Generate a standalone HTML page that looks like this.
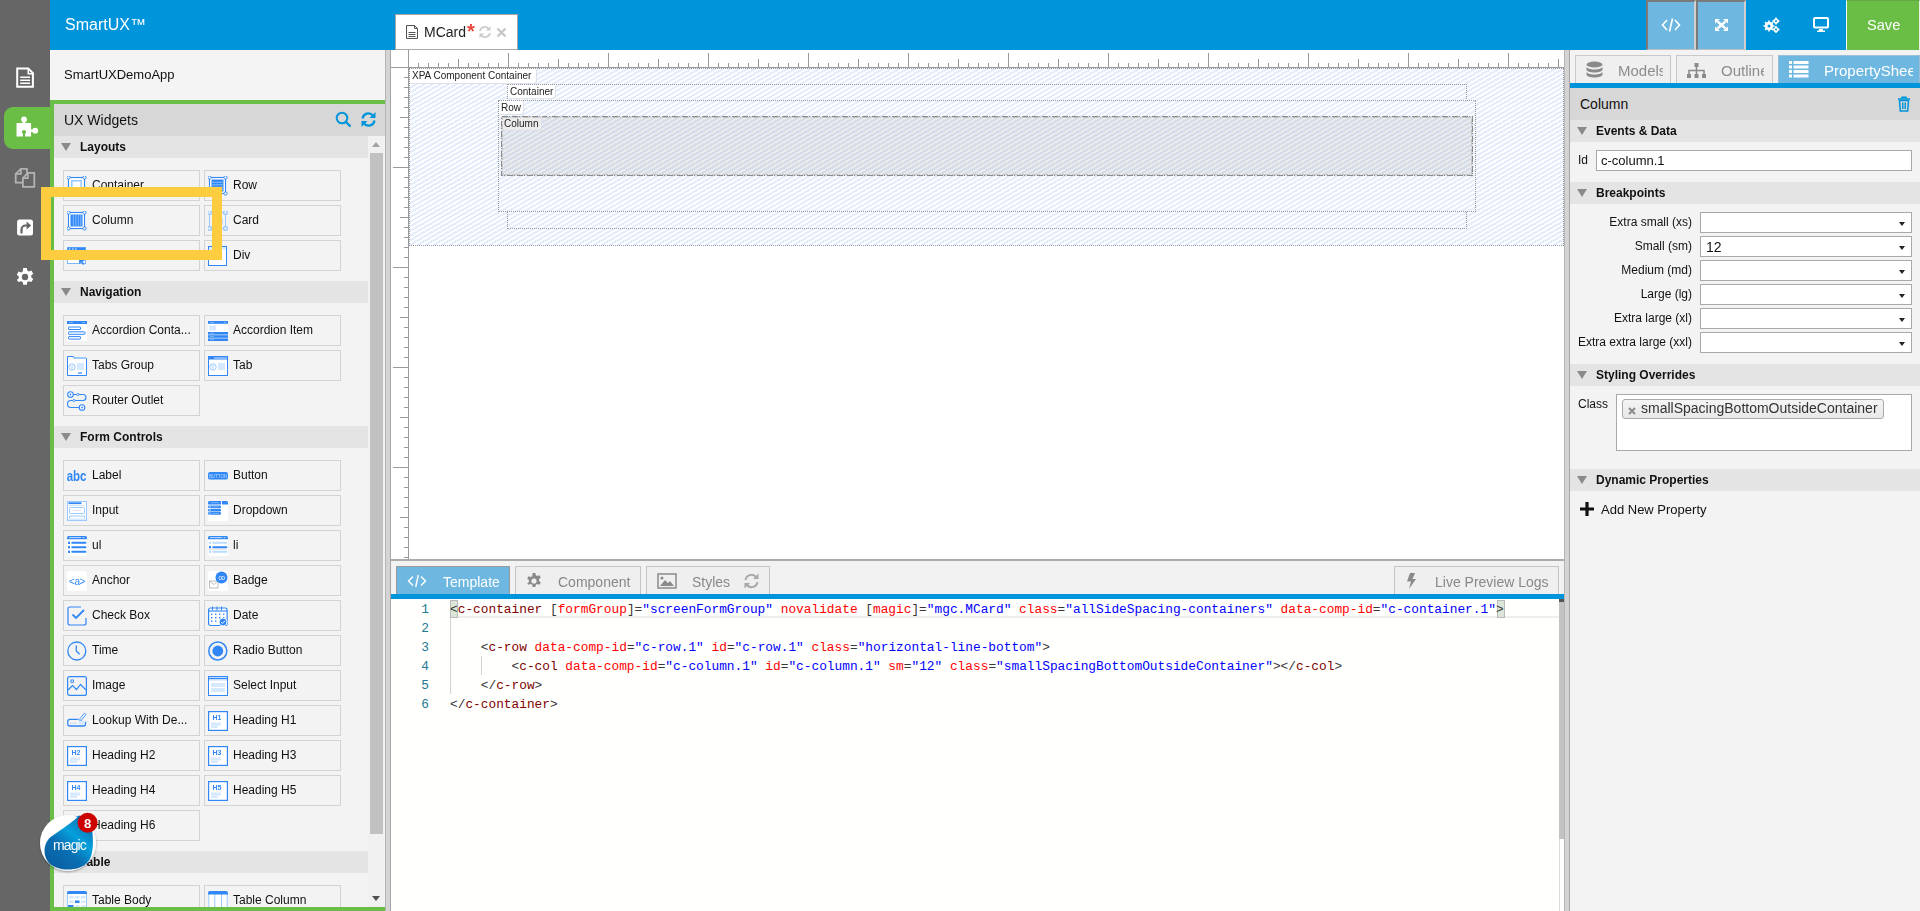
<!DOCTYPE html><html><head><meta charset="utf-8"><title>SmartUX</title><style>
*{box-sizing:border-box;margin:0;padding:0}
html,body{width:1920px;height:911px;overflow:hidden;background:#fff;font-family:"Liberation Sans",sans-serif;color:#222}
.a{position:absolute}
.w{position:absolute;width:137px;height:31px;border:1px solid #d3d3d3;background:#f3f3f3;font-size:12px;color:#111;white-space:nowrap;overflow:hidden}
.w .wi{position:absolute;left:3px;top:5px}
.w span{position:absolute;left:28px;top:7px;line-height:14px}
.sh{position:absolute;height:22px;background:#e4e4e4;font-size:12px;color:#111}
.sh b{position:absolute;left:26px;top:4px;line-height:14px}
.tri{position:absolute;left:7px;top:7px;width:0;height:0;border-left:5.5px solid transparent;border-right:5.5px solid transparent;border-top:8px solid #8a8a8a}
.ptab{position:absolute;top:55px;height:28px;border:1px solid #c9c9c9;border-bottom:none;background:#efefef;color:#8c8c8c;font-size:15px;overflow:hidden;white-space:nowrap}
.etab{position:absolute;top:566px;height:28px;border:1px solid #c4c4c4;border-bottom:none;background:#efefef;color:#888;font-size:14px;white-space:nowrap}
.lbl{position:absolute;font-size:12px;color:#111;text-align:right;width:130px;line-height:14px}
.sel{position:absolute;left:1700px;width:212px;height:21px;border:1px solid #a9a9a9;background:#fff;font-size:14px;color:#111}
.sel:after{content:"";position:absolute;right:6px;top:9px;border-left:3.5px solid transparent;border-right:3.5px solid transparent;border-top:4px solid #222}
.code{position:absolute;left:450px;font-family:"Liberation Mono",monospace;font-size:12.82px;line-height:19px;white-space:pre;color:#383838}
.tg{color:#800000} .at{color:#ff0000} .vl{color:#0000ff}
.ln{position:absolute;left:400px;width:29px;text-align:right;font-family:"Liberation Mono",monospace;font-size:12.82px;line-height:19px;color:#237893}
.cl{position:absolute;font-family:"Liberation Sans",sans-serif;font-size:10px;line-height:12px;color:#222;background:#fff;border-radius:0 0 3px 0;padding:0 3px 0 2px;box-shadow:1px 1px 0 #dde2ea}
</style></head><body><div class="a" style="left:0;top:0;width:50px;height:911px;background:#666"></div><div class="a" style="left:4px;top:107px;width:50px;height:42px;background:#6abd45;border-radius:9px 0 0 9px"></div><svg class="a" style="left:10px;top:60px" width="30" height="32" viewBox="10 60 30 32"><path d="M17.2 68.4h11l4.7 4.7v13.7H17.2z" fill="none" stroke="#fff" stroke-width="2"/><path d="M28.3 68.4v5.3h4.6" fill="none" stroke="#fff" stroke-width="1.6"/><path d="M20.2 77.2h9.8M20.2 80.2h9.8M20.2 83.2h9.8" stroke="#fff" stroke-width="1.6"/></svg><svg class="a" style="left:10px;top:110px" width="35" height="32" viewBox="10 110 35 32"><g fill="#fff"><rect x="16.5" y="123" width="14.6" height="13.5"/><circle cx="24" cy="119.4" r="2.9"/><rect x="22.8" y="120" width="2.4" height="4"/><circle cx="35.2" cy="130.7" r="2.9"/><rect x="30" y="129.5" width="4" height="2.4"/></g><g fill="#6abd45"><circle cx="24" cy="132" r="2.1"/><rect x="23" y="132" width="2" height="5"/></g></svg><svg class="a" style="left:10px;top:162px" width="30" height="30" viewBox="10 162 30 30"><g fill="none" stroke="#b3b3b3" stroke-width="1.8" stroke-linejoin="round"><path d="M27 173V168.8H20.9L15.7 173.9V182.7H22.9"/><path d="M15.7 173.9H20.9V168.8"/><path d="M27.8 172.8H34.3V186.9H22.9V178.2Z"/><path d="M22.9 178.2H27.8V172.8"/></g></svg><svg class="a" style="left:10px;top:210px" width="30" height="30" viewBox="10 210 30 30"><rect x="17.1" y="219.4" width="15.9" height="16" rx="2.5" fill="#fff"/><path d="M21.5 233.5v-4a4 4 0 0 1 4-4h2" fill="none" stroke="#666" stroke-width="2.2"/><path d="M26.6 221.6l4.6 4-4.6 4z" fill="#666"/></svg><svg class="a" style="left:15px;top:267px" width="20" height="20" viewBox="0 0 20 20"><path fill="#fff" fill-rule="evenodd" d="M8.2 1h3.6l.5 2.6 1.6.9 2.5-.9 1.8 3.1-2 1.7v1.9l2 1.7-1.8 3.1-2.5-.9-1.6.9-.5 2.6H8.2l-.5-2.6-1.6-.9-2.5.9L1.8 13l2-1.7V9.4l-2-1.7 1.8-3.1 2.5.9 1.6-.9zM10 6.8a3.2 3.2 0 1 0 0 6.4 3.2 3.2 0 0 0 0-6.4z"/></svg><div class="a" style="left:50px;top:0;width:1870px;height:50px;background:#0095da"></div><div class="a" style="left:65px;top:16px;font-size:16px;color:#fff;line-height:18px">SmartUX™</div><div class="a" style="left:395px;top:14px;width:123px;height:36px;background:#fff;border:1px solid #a9a3a3;border-bottom:1px solid #aaa"></div><svg class="a" style="left:405px;top:24px" width="14" height="16" viewBox="0 0 14 16"><path d="M1.5 1.5h8l3 3v10h-11z" fill="#fff" stroke="#555" stroke-width="1"/><path d="M9.5 1.5v3h3" fill="none" stroke="#555" stroke-width="1"/><path d="M3.5 8.5h7M3.5 10.5h7M3.5 12.5h7" stroke="#555" stroke-width="1"/></svg><div class="a" style="left:424px;top:24px;font-size:14px;line-height:16px;color:#222">MCard</div><div class="a" style="left:467px;top:21px;font-size:20px;font-weight:bold;line-height:21px;color:#e8483c">*</div><svg class="a" style="left:478px;top:25px" width="14" height="14" viewBox="0 0 14 14"><path d="M2 6a5 5 0 0 1 9-2M12 8a5 5 0 0 1-9 2" fill="none" stroke="#ccc" stroke-width="1.8"/><path d="M12.5 1v4.5H8z M1.5 13V8.5H6z" fill="#ccc"/></svg><svg class="a" style="left:496px;top:27px" width="11" height="11" viewBox="0 0 11 11"><path d="M1.5 1.5l8 8M9.5 1.5l-8 8" stroke="#c8c8c8" stroke-width="2.4"/></svg><div class="a" style="left:1646px;top:0;width:50px;height:50px;background:#6db7e1;border-left:2px solid #7a7a7a;border-top:2px solid #7a7a7a;border-bottom:1px solid #b9bfc3;border-right:2px solid #d3cfcc"></div><div class="a" style="left:1696px;top:0;width:50px;height:50px;background:#6db7e1;border-left:2px solid #7a7a7a;border-top:2px solid #7a7a7a;border-bottom:1px solid #b9bfc3;border-right:2px solid #d3cfcc"></div><svg class="a" style="left:1661px;top:17px" width="20" height="16" viewBox="0 0 20 16"><path d="M6 3L1.5 8 6 13M14 3l4.5 5L14 13M11.5 1.5L8.5 14.5" fill="none" stroke="#fff" stroke-width="1.6"/></svg><svg class="a" style="left:1715px;top:19px" width="13" height="12" viewBox="0 0 13 12"><path d="M2.5 2.5l8 7M10.5 2.5l-8 7" stroke="#fff" stroke-width="2.4"/><path fill="#fff" d="M0 0h5L0 4.6zM13 0v4.6L8 0zM0 12V7.4L5 12zM13 12H8l5-4.6z"/></svg><svg class="a" style="left:1763px;top:17px" width="17" height="16" viewBox="0 0 17 16"><g fill="#fff"><circle cx="6" cy="9" r="4.2"/><circle cx="13" cy="4" r="2.6"/><circle cx="13" cy="12.5" r="2.6"/></g><circle cx="6" cy="9" r="1.5" fill="#0095da"/><circle cx="13" cy="4" r="1" fill="#0095da"/><circle cx="13" cy="12.5" r="1" fill="#0095da"/><g stroke="#fff" stroke-width="1.6"><path d="M6 3.5v11M0.5 9h11M2.1 5.1l7.8 7.8M9.9 5.1l-7.8 7.8"/><path d="M13 0.5v7M9.5 4h7M13 9v7M9.5 12.5h7"/></g><circle cx="6" cy="9" r="1.5" fill="#0095da"/><circle cx="13" cy="4" r="1" fill="#0095da"/><circle cx="13" cy="12.5" r="1" fill="#0095da"/></svg><svg class="a" style="left:1813px;top:17px" width="16" height="15" viewBox="0 0 16 15"><rect x="1" y="1" width="14" height="9.5" rx="1" fill="none" stroke="#fff" stroke-width="2"/><path d="M6 12h4v1.5h2V15H4v-1.5h2z" fill="#fff"/></svg><div class="a" style="left:1846px;top:0;width:74px;height:50px;background:#6abd45;border-left:1px solid #f4f9f1;border-top:1px solid #64a846;border-right:1px solid #e9f3e4"></div><div class="a" style="left:1867px;top:17px;font-size:14.6px;line-height:17px;color:#fff">Save</div><div class="a" style="left:50px;top:50px;width:335px;height:50px;background:#f4f4f4"></div><div class="a" style="left:64px;top:67px;font-size:13px;line-height:15px;color:#111">SmartUXDemoApp</div><div class="a" style="left:50px;top:100px;width:335px;height:811px;background:#6abd45"></div><div class="a" style="left:54px;top:104px;width:331px;height:803px;background:#f3f3f3"></div><div class="a" style="left:54px;top:104px;width:331px;height:32px;background:#d7d7d7"></div><div class="a" style="left:64px;top:112px;font-size:14px;line-height:16px;color:#111">UX Widgets</div><svg class="a" style="left:335px;top:111px" width="17" height="17" viewBox="0 0 17 17"><circle cx="7" cy="7" r="5.3" fill="none" stroke="#0095da" stroke-width="2"/><path d="M10.8 10.8l4.7 4.7" stroke="#0095da" stroke-width="2.4"/></svg><svg class="a" style="left:360px;top:111px" width="17" height="17" viewBox="0 0 17 17"><path d="M2.5 7.5a6 6 0 0 1 10.5-3M14.5 9.5a6 6 0 0 1-10.5 3" fill="none" stroke="#0095da" stroke-width="2.2"/><path d="M15.5 1v6h-6z M1.5 16v-6h6z" fill="#0095da"/></svg><div class="a" style="left:368px;top:136px;width:17px;height:771px;background:#f1f1f1"></div><div class="a" style="left:370px;top:153px;width:13px;height:681px;background:#c1c1c1"></div><div class="a" style="left:372px;top:142px;border-left:4.5px solid transparent;border-right:4.5px solid transparent;border-bottom:5px solid #a3a3a3"></div><div class="a" style="left:372px;top:896px;border-left:4.5px solid transparent;border-right:4.5px solid transparent;border-top:5px solid #505050"></div><div class="a" style="left:54px;top:136px;width:331px;height:771px;overflow:hidden"><div class="a" style="left:-54px;top:-136px;width:1920px;height:911px"><div class="sh" style="left:54px;top:136px;width:314px"><i class="tri"></i><b>Layouts</b></div><div class="w" style="left:63px;top:170px"><svg class="wi" width="22" height="22" viewBox="0 0 22 22"><rect x="1.5" y="1.5" width="16" height="16" fill="#fff" stroke="#3187f5" stroke-width="1.1"/><rect x="4.8" y="4.8" width="9.4" height="9.4" fill="#fff" stroke="#9ccaff" stroke-width="1.6"/><circle cx="1.5" cy="1.5" r="1.6" fill="#fff" stroke="#3187f5" stroke-width="1"/><circle cx="17.5" cy="1.5" r="1.6" fill="#fff" stroke="#3187f5" stroke-width="1"/><circle cx="1.5" cy="17.5" r="1.6" fill="#fff" stroke="#3187f5" stroke-width="1"/><circle cx="17.5" cy="17.5" r="1.6" fill="#fff" stroke="#3187f5" stroke-width="1"/></svg><span>Container</span></div><div class="w" style="left:204px;top:170px"><svg class="wi" width="22" height="22" viewBox="0 0 22 22"><rect x="1.5" y="1.5" width="16" height="16" fill="#fff" stroke="#3187f5" stroke-width="1.1"/><rect x="3.5" y="3.5" width="12" height="12" fill="#3187f5"/><path d="M3.5 6.3h12M3.5 8.8h12M3.5 11.3h12M3.5 13.8h12" stroke="#a8d1ff" stroke-width="0.7"/><circle cx="1.5" cy="1.5" r="1.6" fill="#fff" stroke="#3187f5" stroke-width="1"/><circle cx="17.5" cy="1.5" r="1.6" fill="#fff" stroke="#3187f5" stroke-width="1"/><circle cx="1.5" cy="17.5" r="1.6" fill="#fff" stroke="#3187f5" stroke-width="1"/><circle cx="17.5" cy="17.5" r="1.6" fill="#fff" stroke="#3187f5" stroke-width="1"/></svg><span>Row</span></div><div class="w" style="left:63px;top:205px"><svg class="wi" width="22" height="22" viewBox="0 0 22 22"><rect x="1.5" y="1.5" width="16" height="16" fill="#fff" stroke="#3187f5" stroke-width="1.1"/><rect x="3.5" y="3.5" width="12" height="12" fill="#3187f5"/><path d="M6.3 3.5v12M8.8 3.5v12M11.3 3.5v12M13.8 3.5v12" stroke="#a8d1ff" stroke-width="0.7"/><circle cx="1.5" cy="1.5" r="1.6" fill="#fff" stroke="#3187f5" stroke-width="1"/><circle cx="17.5" cy="1.5" r="1.6" fill="#fff" stroke="#3187f5" stroke-width="1"/><circle cx="1.5" cy="17.5" r="1.6" fill="#fff" stroke="#3187f5" stroke-width="1"/><circle cx="17.5" cy="17.5" r="1.6" fill="#fff" stroke="#3187f5" stroke-width="1"/></svg><span>Column</span></div><div class="w" style="left:204px;top:205px"><svg class="wi" width="22" height="22" viewBox="0 0 22 22"><rect x="1.5" y="1.5" width="16" height="16" fill="none" stroke="#9ccaff" stroke-width="1"/><rect x="9" y="8" width="5" height="5" fill="none" stroke="#9ccaff" stroke-width="1"/><rect x="-0.10000000000000009" y="-0.10000000000000009" width="3.2" height="3.2" fill="#fff" stroke="#7db8ff" stroke-width="1"/><rect x="15.9" y="-0.10000000000000009" width="3.2" height="3.2" fill="#fff" stroke="#7db8ff" stroke-width="1"/><rect x="-0.10000000000000009" y="15.9" width="3.2" height="3.2" fill="#fff" stroke="#7db8ff" stroke-width="1"/><rect x="15.9" y="15.9" width="3.2" height="3.2" fill="#fff" stroke="#7db8ff" stroke-width="1"/></svg><span>Card</span></div><div class="w" style="left:63px;top:240px"><svg class="wi" width="22" height="22" viewBox="0 0 22 22"><rect x="0.5" y="1.5" width="18" height="16" fill="#fff" stroke="#7db8ff" stroke-width="1"/><rect x="0.5" y="1.5" width="18" height="3" fill="#3187f5"/><path d="M2 3h1.5M5 3h1.5M8 3h1.5" stroke="#fff" stroke-width="1.2"/><path d="M12 12l6 2.5-2.5 1 1.8 2.8-1.3.8-1.8-2.8-2 1.8z" fill="#3187f5"/></svg><span>Grid</span></div><div class="w" style="left:204px;top:240px"><svg class="wi" width="22" height="22" viewBox="0 0 22 22"><rect x="0.5" y="0.5" width="18" height="19" fill="#fff" stroke="#3187f5" stroke-width="1"/><rect x="1" y="1" width="17" height="2.5" fill="#d6e9ff"/><path d="M6 8l5 3-5 3" fill="none" stroke="#9ccaff" stroke-width="1"/></svg><span>Div</span></div><div class="sh" style="left:54px;top:281px;width:314px"><i class="tri"></i><b>Navigation</b></div><div class="w" style="left:63px;top:315px"><svg class="wi" width="22" height="22" viewBox="0 0 22 22"><rect x="0" y="0" width="20" height="20" fill="#fff"/><rect x="0" y="0" width="20" height="3" fill="#3187f5"/><path d="M2 1.5h4M15 1.5h3" stroke="#8fc4ff" stroke-width="0.8"/><rect x="1.5" y="6" width="12" height="2.5" rx="0.5" fill="none" stroke="#3187f5" stroke-width="1"/><rect x="1.5" y="10.8" width="16.5" height="2.5" rx="0.5" fill="none" stroke="#3187f5" stroke-width="1"/><rect x="1.5" y="15.6" width="12" height="2.5" rx="0.5" fill="none" stroke="#3187f5" stroke-width="1"/></svg><span>Accordion Conta...</span></div><div class="w" style="left:204px;top:315px"><svg class="wi" width="22" height="22" viewBox="0 0 22 22"><rect x="0" y="0" width="20" height="20" fill="#fff"/><rect x="0" y="0" width="20" height="2.8" fill="#3187f5"/><path d="M2 1.4h4M16 1.4h2" stroke="#8fc4ff" stroke-width="0.8"/><rect x="1" y="4.5" width="7" height="5" fill="#d6e9ff"/><rect x="0" y="11" width="20" height="2.6" fill="#3187f5"/><rect x="0" y="14.2" width="20" height="2.6" fill="#3187f5"/><rect x="0" y="17.4" width="20" height="2.6" fill="#3187f5"/><path d="M2 12.3h4M2 15.5h4M2 18.7h4" stroke="#8fc4ff" stroke-width="0.7"/></svg><span>Accordion Item</span></div><div class="w" style="left:63px;top:350px"><svg class="wi" width="22" height="22" viewBox="0 0 22 22"><path d="M0.5 19.5V0.5h6l1 2h12v17z" fill="#fff" stroke="#3187f5" stroke-width="1"/><path d="M8 1h11v2H8z" fill="#9ccaff"/><circle cx="5" cy="11" r="3.2" fill="none" stroke="#9ccaff" stroke-width="1"/><path d="M3 9.5l2 1.5v2.5M6.5 8.5l-1 2" stroke="#9ccaff" stroke-width="0.8" fill="none"/><rect x="10" y="7" width="7" height="7" fill="#d6e9ff"/><path d="M11 17h4" stroke="#3187f5" stroke-width="1.2"/></svg><span>Tabs Group</span></div><div class="w" style="left:204px;top:350px"><svg class="wi" width="22" height="22" viewBox="0 0 22 22"><rect x="0.5" y="0.5" width="19" height="19" fill="#fff" stroke="#3187f5" stroke-width="1"/><rect x="0.5" y="0.5" width="19" height="3" fill="#3187f5"/><path d="M6 2h13" stroke="#fff" stroke-width="0.8"/><circle cx="5" cy="11" r="3.2" fill="none" stroke="#9ccaff" stroke-width="1"/><path d="M3 9.5l2 1.5v2.5M6.5 8.5l-1 2" stroke="#9ccaff" stroke-width="0.8" fill="none"/><rect x="10" y="7" width="7" height="7" fill="#d6e9ff"/></svg><span>Tab</span></div><div class="w" style="left:63px;top:385px"><svg class="wi" width="22" height="22" viewBox="0 0 22 22"><circle cx="3.5" cy="3.5" r="2.8" fill="#fff" stroke="#3187f5" stroke-width="1.1"/><circle cx="15" cy="16.5" r="2.8" fill="#fff" stroke="#3187f5" stroke-width="1.1"/><path d="M6.3 3.5H16a3 3 0 0 1 0 6H4a3 3 0 0 0 0 7h8.2" fill="none" stroke="#3187f5" stroke-width="1.1"/><circle cx="3.5" cy="3.5" r="0.9" fill="#3187f5"/><circle cx="15" cy="16.5" r="0.9" fill="#3187f5"/><circle cx="11" cy="3.5" r="1.1" fill="#fff" stroke="#3187f5" stroke-width="0.8"/><circle cx="7" cy="9.5" r="1.1" fill="#fff" stroke="#3187f5" stroke-width="0.8"/></svg><span>Router Outlet</span></div><div class="sh" style="left:54px;top:426px;width:314px"><i class="tri"></i><b>Form Controls</b></div><div class="w" style="left:63px;top:460px"><svg class="wi" width="22" height="22" viewBox="0 0 22 22"><text x="0" y="0" transform="translate(-0.3 15) scale(0.96 1.2)" font-family="Liberation Sans" font-weight="bold" font-size="12" fill="#3187f5">abc</text></svg><span>Label</span></div><div class="w" style="left:204px;top:460px"><svg class="wi" width="22" height="22" viewBox="0 0 22 22"><rect x="0" y="6" width="20" height="7.6" rx="2.2" fill="#3187f5"/><text x="10" y="11.5" font-family="Liberation Sans" font-size="4.6" fill="#b9dcff" text-anchor="middle" letter-spacing="-0.1">BUTTON</text></svg><span>Button</span></div><div class="w" style="left:63px;top:495px"><svg class="wi" width="22" height="22" viewBox="0 0 22 22"><rect x="0.5" y="0.5" width="19" height="19" fill="#fff" stroke="#9ccaff" stroke-width="1"/><rect x="1.5" y="1.3" width="13" height="1.8" fill="#3187f5"/><path d="M2 4.5h16" stroke="#d6e9ff" stroke-width="1.2"/><rect x="2.5" y="6.5" width="15" height="6" rx="1" fill="#fff" stroke="#9ccaff" stroke-width="1"/><path d="M6 9.5h8" stroke="#ddd" stroke-width="0.8"/><path d="M2.5 17V15h15v2" fill="none" stroke="#9ccaff" stroke-width="1"/><rect x="1" y="17.5" width="18" height="1.5" fill="#d6e9ff"/></svg><span>Input</span></div><div class="w" style="left:204px;top:495px"><svg class="wi" width="22" height="22" viewBox="0 0 22 22"><rect x="0" y="0" width="20" height="20" rx="1.5" fill="#fff"/><path d="M0 3.5V1.5Q0 0 1.5 0H13v3.5z" fill="#3187f5"/><path d="M14 0h4.5Q20 0 20 1.5v2H14z" fill="#3187f5"/><path d="M3 1.7h8" stroke="#8fc4ff" stroke-width="0.7"/><rect x="0" y="4.5" width="13" height="2.6" rx="1.2" fill="#3187f5"/><rect x="0" y="7.8" width="13" height="2.6" rx="1.2" fill="#3187f5"/><rect x="0" y="11.1" width="13" height="2.6" rx="1.2" fill="#3187f5"/><path d="M2 4.8v2M2 8.1v2M2 11.4v2" stroke="#fff" stroke-width="0.8"/><path d="M4 5.8h7M4 12.4h7" stroke="#8fc4ff" stroke-width="0.6"/></svg><span>Dropdown</span></div><div class="w" style="left:63px;top:530px"><svg class="wi" width="22" height="22" viewBox="0 0 22 22"><rect x="0" y="0" width="20" height="20" rx="1.5" fill="#fff"/><path d="M0 3.2V1.5Q0 0 1.5 0h17Q20 0 20 1.5v1.7z" fill="#3187f5"/><path d="M2 1.6h12M15.5 1.6h2" stroke="#fff" stroke-width="0.7"/><rect x="1" y="5.6" width="2" height="2.4" fill="#3187f5"/><rect x="1" y="10" width="2" height="2.4" fill="#3187f5"/><rect x="1" y="14.6" width="2" height="2.4" fill="#3187f5"/><path d="M5.2 6.8h13.3M5.2 11.2h13.3M5.2 15.8h13.3" stroke="#3187f5" stroke-width="1.9" stroke-linecap="round"/></svg><span>ul</span></div><div class="w" style="left:204px;top:530px"><svg class="wi" width="22" height="22" viewBox="0 0 22 22"><rect x="0" y="0" width="20" height="20" rx="1.5" fill="#fff"/><path d="M0 3.2V1.5Q0 0 1.5 0h17Q20 0 20 1.5v1.7z" fill="#3187f5"/><path d="M2 1.6h12M15.5 1.6h2" stroke="#fff" stroke-width="0.7"/><rect x="1" y="5.6" width="2" height="2.4" fill="#b9dcff"/><rect x="1" y="10" width="2" height="2.4" fill="#3187f5"/><rect x="1" y="14.6" width="2" height="2.4" fill="#b9dcff"/><path d="M5.2 6.8h13.3M5.2 15.8h13.3" stroke="#b9dcff" stroke-width="1.9" stroke-linecap="round"/><path d="M5.2 11.2h13.3" stroke="#3187f5" stroke-width="1.9" stroke-linecap="round"/><path d="M0.5 13.3h18" stroke="#ccc" stroke-width="0.6"/></svg><span>li</span></div><div class="w" style="left:63px;top:565px"><svg class="wi" width="22" height="22" viewBox="0 0 22 22"><rect x="0" y="0" width="20" height="20" rx="2" fill="#fff"/><text x="10" y="13.5" font-family="Liberation Sans" font-size="10" fill="#3187f5" text-anchor="middle" letter-spacing="-0.4">&lt;a&gt;</text></svg><span>Anchor</span></div><div class="w" style="left:204px;top:565px"><svg class="wi" width="22" height="22" viewBox="0 0 22 22"><rect x="0" y="0" width="20" height="20" rx="2" fill="#fff"/><rect x="1.5" y="10" width="8.5" height="7" fill="#fff" stroke="#b5b5b5" stroke-width="0.9"/><path d="M1.5 10l4.25 3.5L10 10" fill="none" stroke="#b5b5b5" stroke-width="0.9"/><circle cx="13.5" cy="6.5" r="6" fill="#3187f5"/><text x="13.5" y="8.6" font-family="Liberation Sans" font-size="6" fill="#fff" text-anchor="middle" letter-spacing="-0.3">00</text></svg><span>Badge</span></div><div class="w" style="left:63px;top:600px"><svg class="wi" width="22" height="22" viewBox="0 0 22 22"><path d="M14 1H3Q1 1 1 3v14q0 2 2 2h14q2 0 2-2v-5" fill="none" stroke="#3187f5" stroke-width="1.2"/><path d="M5.5 8.5l3.5 3.5L17 4" fill="none" stroke="#3187f5" stroke-width="1.8"/></svg><span>Check Box</span></div><div class="w" style="left:204px;top:600px"><svg class="wi" width="22" height="22" viewBox="0 0 22 22"><rect x="0.6" y="2" width="18.5" height="17.5" rx="2" fill="#fff" stroke="#3187f5" stroke-width="1.2"/><path d="M0.6 5h18.5" stroke="#3187f5" stroke-width="1.2"/><path d="M4.5 0.5v3.5M9 0.5v3.5M13.5 0.5v3.5" stroke="#3187f5" stroke-width="1"/><g fill="#3187f5"><rect x="3" y="7.5" width="1.4" height="1.4"/><rect x="7" y="7.5" width="1.4" height="1.4"/><rect x="11" y="7.5" width="1.4" height="1.4"/><rect x="15" y="7.5" width="1.4" height="1.4"/><rect x="3" y="11" width="1.4" height="1.4"/><rect x="7" y="11" width="1.4" height="1.4"/><rect x="11" y="11" width="1.4" height="1.4"/><rect x="15" y="11" width="1.4" height="1.4"/><rect x="3" y="14.5" width="1.4" height="1.4"/><rect x="7" y="14.5" width="1.4" height="1.4"/></g><circle cx="15" cy="16" r="4" fill="#3187f5" stroke="#fff" stroke-width="0.9"/><path d="M13 16l1.4 1.4 2.6-2.6" fill="none" stroke="#fff" stroke-width="1"/></svg><span>Date</span></div><div class="w" style="left:63px;top:635px"><svg class="wi" width="22" height="22" viewBox="0 0 22 22"><circle cx="9.8" cy="10" r="9" fill="none" stroke="#3187f5" stroke-width="1.3"/><path d="M9.3 4.5v5.5l3.3 3.3" fill="none" stroke="#3187f5" stroke-width="1.3"/></svg><span>Time</span></div><div class="w" style="left:204px;top:635px"><svg class="wi" width="22" height="22" viewBox="0 0 22 22"><circle cx="9.8" cy="10" r="9" fill="none" stroke="#3187f5" stroke-width="1.5"/><circle cx="9.8" cy="10" r="5.4" fill="#3187f5"/></svg><span>Radio Button</span></div><div class="w" style="left:63px;top:670px"><svg class="wi" width="22" height="22" viewBox="0 0 22 22"><rect x="0.6" y="0.6" width="18.8" height="18.8" rx="2" fill="none" stroke="#3187f5" stroke-width="1.2"/><rect x="4" y="4" width="2.4" height="2.4" fill="none" stroke="#3187f5" stroke-width="0.9"/><path d="M1 14l4.5-4.5 4 4 4-5 5.5 5.5" fill="none" stroke="#3187f5" stroke-width="1.2"/></svg><span>Image</span></div><div class="w" style="left:204px;top:670px"><svg class="wi" width="22" height="22" viewBox="0 0 22 22"><rect x="0.5" y="0.5" width="19" height="19" fill="#fff" stroke="#3187f5" stroke-width="1"/><path d="M1 2.5h18" stroke="#3187f5" stroke-width="1.6"/><path d="M1 4.3h18" stroke="#d6e9ff" stroke-width="1"/><rect x="3" y="7" width="14" height="4" fill="#d6e9ff"/><rect x="3" y="12" width="14" height="4" fill="#d6e9ff"/></svg><span>Select Input</span></div><div class="w" style="left:63px;top:705px"><svg class="wi" width="22" height="22" viewBox="0 0 22 22"><path d="M11.5 8.3H3Q0.8 8.3 0.8 10.5v2.5Q0.8 15 3 15h13.5q2-0 2-2v-2.2" fill="none" stroke="#3187f5" stroke-width="1.3"/><path d="M3 12.2h1.2M5.5 12.2h1.2M8 12.2h1.2" stroke="#9ccaff" stroke-width="1"/><path d="M13 12l1.5-3 4.5-5.5-1.6-1.3-4.5 5.5z" fill="#fff" stroke="#3187f5" stroke-width="0.9"/><rect x="12" y="10" width="6" height="3.5" fill="#d6e9ff"/></svg><span>Lookup With De...</span></div><div class="w" style="left:204px;top:705px"><svg class="wi" width="22" height="22" viewBox="0 0 22 22"><rect x="0.6" y="0.6" width="18.8" height="18.8" fill="#fff" stroke="#3187f5" stroke-width="1.2"/><text x="9" y="8.8" font-family="Liberation Sans" font-weight="bold" font-size="7" fill="#3187f5" text-anchor="middle">H1</text><rect x="3" y="11.5" width="10" height="3" fill="#d6e9ff"/><rect x="3" y="14.5" width="7" height="2.5" fill="#d6e9ff"/></svg><span>Heading H1</span></div><div class="w" style="left:63px;top:740px"><svg class="wi" width="22" height="22" viewBox="0 0 22 22"><rect x="0.6" y="0.6" width="18.8" height="18.8" fill="#fff" stroke="#3187f5" stroke-width="1.2"/><text x="9" y="8.8" font-family="Liberation Sans" font-weight="bold" font-size="7" fill="#3187f5" text-anchor="middle">H2</text><rect x="3" y="11.5" width="10" height="3" fill="#d6e9ff"/><rect x="3" y="14.5" width="7" height="2.5" fill="#d6e9ff"/></svg><span>Heading H2</span></div><div class="w" style="left:204px;top:740px"><svg class="wi" width="22" height="22" viewBox="0 0 22 22"><rect x="0.6" y="0.6" width="18.8" height="18.8" fill="#fff" stroke="#3187f5" stroke-width="1.2"/><text x="9" y="8.8" font-family="Liberation Sans" font-weight="bold" font-size="7" fill="#3187f5" text-anchor="middle">H3</text><rect x="3" y="11.5" width="10" height="3" fill="#d6e9ff"/><rect x="3" y="14.5" width="7" height="2.5" fill="#d6e9ff"/></svg><span>Heading H3</span></div><div class="w" style="left:63px;top:775px"><svg class="wi" width="22" height="22" viewBox="0 0 22 22"><rect x="0.6" y="0.6" width="18.8" height="18.8" fill="#fff" stroke="#3187f5" stroke-width="1.2"/><text x="9" y="8.8" font-family="Liberation Sans" font-weight="bold" font-size="7" fill="#3187f5" text-anchor="middle">H4</text><rect x="3" y="11.5" width="10" height="3" fill="#d6e9ff"/><rect x="3" y="14.5" width="7" height="2.5" fill="#d6e9ff"/></svg><span>Heading H4</span></div><div class="w" style="left:204px;top:775px"><svg class="wi" width="22" height="22" viewBox="0 0 22 22"><rect x="0.6" y="0.6" width="18.8" height="18.8" fill="#fff" stroke="#3187f5" stroke-width="1.2"/><text x="9" y="8.8" font-family="Liberation Sans" font-weight="bold" font-size="7" fill="#3187f5" text-anchor="middle">H5</text><rect x="3" y="11.5" width="10" height="3" fill="#d6e9ff"/><rect x="3" y="14.5" width="7" height="2.5" fill="#d6e9ff"/></svg><span>Heading H5</span></div><div class="w" style="left:63px;top:810px"><svg class="wi" width="22" height="22" viewBox="0 0 22 22"><rect x="0.6" y="0.6" width="18.8" height="18.8" fill="#fff" stroke="#3187f5" stroke-width="1.2"/><text x="9" y="8.8" font-family="Liberation Sans" font-weight="bold" font-size="7" fill="#3187f5" text-anchor="middle">H6</text><rect x="3" y="11.5" width="10" height="3" fill="#d6e9ff"/><rect x="3" y="14.5" width="7" height="2.5" fill="#d6e9ff"/></svg><span>Heading H6</span></div><div class="sh" style="left:54px;top:851px;width:314px"><i class="tri"></i><b>Table</b></div><div class="w" style="left:63px;top:885px"><svg class="wi" width="22" height="22" viewBox="0 0 22 22"><path d="M0.5 20V2Q0.5 0.5 2 0.5h16Q19.5 0.5 19.5 2v18" fill="#fff" stroke="#9ccaff" stroke-width="1"/><path d="M0 3V2Q0 0 2 0h16Q20 0 20 2v1z" fill="#3187f5"/><g fill="#d6e9ff"><rect x="2" y="5" width="4.5" height="2.5"/><rect x="8" y="5" width="4.5" height="2.5"/><rect x="14" y="5" width="4.5" height="2.5"/><rect x="2" y="9.5" width="4.5" height="2.5"/><rect x="14" y="9.5" width="4.5" height="2.5"/><rect x="8" y="14" width="4.5" height="2.5"/><rect x="14" y="14" width="4.5" height="2.5"/></g><rect x="8" y="9.5" width="4.5" height="2.5" fill="#3187f5"/><rect x="1" y="14" width="5.5" height="2.5" fill="#3187f5"/></svg><span>Table Body</span></div><div class="w" style="left:204px;top:885px"><svg class="wi" width="22" height="22" viewBox="0 0 22 22"><rect x="0" y="2" width="20" height="18" fill="#fff"/><path d="M0.8 3v17M6.8 3v17M13.5 3v17M19.2 3v17" stroke="#9ccaff" stroke-width="1"/><path d="M0 3.5V2Q0 0 2 0h16Q20 0 20 2v1.5z" fill="#3187f5"/></svg><span>Table Column</span></div></div></div><div class="a" style="left:368px;top:136px;width:17px;height:771px;background:#f1f1f1"></div><div class="a" style="left:370px;top:153px;width:13px;height:681px;background:#c1c1c1"></div><div class="a" style="left:372px;top:142px;border-left:4.5px solid transparent;border-right:4.5px solid transparent;border-bottom:5px solid #a3a3a3"></div><div class="a" style="left:372px;top:896px;border-left:4.5px solid transparent;border-right:4.5px solid transparent;border-top:5px solid #505050"></div><div class="a" style="left:41px;top:187px;width:181px;height:73px;border:10px solid #fecd3f"></div><svg class="a" style="left:30px;top:805px" width="80" height="75" viewBox="30 805 80 75">
<defs><linearGradient id="mg" x1="0" y1="1" x2="0.75" y2="0"><stop offset="0" stop-color="#0a5a9c"/><stop offset="0.45" stop-color="#0a6fb3"/><stop offset="0.7" stop-color="#04a0dc"/><stop offset="1" stop-color="#0a6db0"/></linearGradient>
<filter id="sh" x="-20%" y="-20%" width="140%" height="140%"><feDropShadow dx="0" dy="1" stdDeviation="1.2" flood-color="#000" flood-opacity="0.35"/></filter></defs>
<circle cx="68" cy="843" r="28" fill="#fff" filter="url(#sh)"/>
<path d="M79 815.5C73 822 62 829 52 836C43 842 42 856 50 864C58 871 78 872 87 863C93 857 93.5 845 92.5 833C91.5 823 86 816.5 79 815.5Z" fill="url(#mg)"/>
<text x="69.5" y="850" font-family="Liberation Sans" font-size="14" fill="#fff" text-anchor="middle" letter-spacing="-0.9">magic</text>
<circle cx="87.6" cy="822.7" r="10" fill="#cc0000"/>
<text x="87.6" y="827.5" font-family="Liberation Sans" font-weight="bold" font-size="13" fill="#fff" text-anchor="middle">8</text>
</svg><div class="a" style="left:385px;top:50px;width:6px;height:861px;background:#d4d4d4;border-left:1px solid #b5b5b5;border-right:1px solid #a5a5a5"></div><div class="a" style="left:1564px;top:50px;width:6px;height:861px;background:#d4d4d4;border-left:1px solid #b5b5b5;border-right:1px solid #a5a5a5"></div><div class="a" style="left:391px;top:50px;width:1173px;height:509px;background:#fff"></div><svg class="a" style="left:391px;top:50px" width="1173" height="509" viewBox="391 50 1173 509" shape-rendering="crispEdges"><defs><pattern id="hp" x="0" y="0" width="8" height="4" patternUnits="userSpaceOnUse"><g fill="#dfe7fb"><rect x="0" y="0" width="4" height="1"/><rect x="6" y="1" width="2" height="1"/><rect x="0" y="1" width="2" height="1"/><rect x="4" y="2" width="4" height="1"/><rect x="2" y="3" width="4" height="1"/></g></pattern></defs><g stroke="#9a9a9a" stroke-width="1"><path d="M408.5 53V67" /><path d="M418.5 63V67" /><path d="M428.5 63V67" /><path d="M438.5 63V67" /><path d="M448.5 63V67" /><path d="M458.5 59V67" /><path d="M468.5 63V67" /><path d="M478.5 63V67" /><path d="M488.5 63V67" /><path d="M498.5 63V67" /><path d="M508.5 53V67" /><path d="M518.5 63V67" /><path d="M528.5 63V67" /><path d="M538.5 63V67" /><path d="M548.5 63V67" /><path d="M558.5 59V67" /><path d="M568.5 63V67" /><path d="M578.5 63V67" /><path d="M588.5 63V67" /><path d="M598.5 63V67" /><path d="M608.5 53V67" /><path d="M618.5 63V67" /><path d="M628.5 63V67" /><path d="M638.5 63V67" /><path d="M648.5 63V67" /><path d="M658.5 59V67" /><path d="M668.5 63V67" /><path d="M678.5 63V67" /><path d="M688.5 63V67" /><path d="M698.5 63V67" /><path d="M708.5 53V67" /><path d="M718.5 63V67" /><path d="M728.5 63V67" /><path d="M738.5 63V67" /><path d="M748.5 63V67" /><path d="M758.5 59V67" /><path d="M768.5 63V67" /><path d="M778.5 63V67" /><path d="M788.5 63V67" /><path d="M798.5 63V67" /><path d="M808.5 53V67" /><path d="M818.5 63V67" /><path d="M828.5 63V67" /><path d="M838.5 63V67" /><path d="M848.5 63V67" /><path d="M858.5 59V67" /><path d="M868.5 63V67" /><path d="M878.5 63V67" /><path d="M888.5 63V67" /><path d="M898.5 63V67" /><path d="M908.5 53V67" /><path d="M918.5 63V67" /><path d="M928.5 63V67" /><path d="M938.5 63V67" /><path d="M948.5 63V67" /><path d="M958.5 59V67" /><path d="M968.5 63V67" /><path d="M978.5 63V67" /><path d="M988.5 63V67" /><path d="M998.5 63V67" /><path d="M1008.5 53V67" /><path d="M1018.5 63V67" /><path d="M1028.5 63V67" /><path d="M1038.5 63V67" /><path d="M1048.5 63V67" /><path d="M1058.5 59V67" /><path d="M1068.5 63V67" /><path d="M1078.5 63V67" /><path d="M1088.5 63V67" /><path d="M1098.5 63V67" /><path d="M1108.5 53V67" /><path d="M1118.5 63V67" /><path d="M1128.5 63V67" /><path d="M1138.5 63V67" /><path d="M1148.5 63V67" /><path d="M1158.5 59V67" /><path d="M1168.5 63V67" /><path d="M1178.5 63V67" /><path d="M1188.5 63V67" /><path d="M1198.5 63V67" /><path d="M1208.5 53V67" /><path d="M1218.5 63V67" /><path d="M1228.5 63V67" /><path d="M1238.5 63V67" /><path d="M1248.5 63V67" /><path d="M1258.5 59V67" /><path d="M1268.5 63V67" /><path d="M1278.5 63V67" /><path d="M1288.5 63V67" /><path d="M1298.5 63V67" /><path d="M1308.5 53V67" /><path d="M1318.5 63V67" /><path d="M1328.5 63V67" /><path d="M1338.5 63V67" /><path d="M1348.5 63V67" /><path d="M1358.5 59V67" /><path d="M1368.5 63V67" /><path d="M1378.5 63V67" /><path d="M1388.5 63V67" /><path d="M1398.5 63V67" /><path d="M1408.5 53V67" /><path d="M1418.5 63V67" /><path d="M1428.5 63V67" /><path d="M1438.5 63V67" /><path d="M1448.5 63V67" /><path d="M1458.5 59V67" /><path d="M1468.5 63V67" /><path d="M1478.5 63V67" /><path d="M1488.5 63V67" /><path d="M1498.5 63V67" /><path d="M1508.5 53V67" /><path d="M1518.5 63V67" /><path d="M1528.5 63V67" /><path d="M1538.5 63V67" /><path d="M1548.5 63V67" /><path d="M1558.5 59V67" /><path d="M404 67.5H408" /><path d="M404 77.5H408" /><path d="M404 87.5H408" /><path d="M404 97.5H408" /><path d="M404 107.5H408" /><path d="M400 117.5H408" /><path d="M404 127.5H408" /><path d="M404 137.5H408" /><path d="M404 147.5H408" /><path d="M404 157.5H408" /><path d="M393 167.5H408" /><path d="M404 177.5H408" /><path d="M404 187.5H408" /><path d="M404 197.5H408" /><path d="M404 207.5H408" /><path d="M400 217.5H408" /><path d="M404 227.5H408" /><path d="M404 237.5H408" /><path d="M404 247.5H408" /><path d="M404 257.5H408" /><path d="M393 267.5H408" /><path d="M404 277.5H408" /><path d="M404 287.5H408" /><path d="M404 297.5H408" /><path d="M404 307.5H408" /><path d="M400 317.5H408" /><path d="M404 327.5H408" /><path d="M404 337.5H408" /><path d="M404 347.5H408" /><path d="M404 357.5H408" /><path d="M393 367.5H408" /><path d="M404 377.5H408" /><path d="M404 387.5H408" /><path d="M404 397.5H408" /><path d="M404 407.5H408" /><path d="M400 417.5H408" /><path d="M404 427.5H408" /><path d="M404 437.5H408" /><path d="M404 447.5H408" /><path d="M404 457.5H408" /><path d="M393 467.5H408" /><path d="M404 477.5H408" /><path d="M404 487.5H408" /><path d="M404 497.5H408" /><path d="M404 507.5H408" /><path d="M400 517.5H408" /><path d="M404 527.5H408" /><path d="M404 537.5H408" /><path d="M404 547.5H408" /><path d="M404 557.5H408" /></g><path d="M408.5 50V559M391 67.5H1564" stroke="#9a9a9a" stroke-width="1"/></svg><div class="a" style="left:409px;top:68px;width:1155px;height:178px;background:repeating-linear-gradient(150deg,#e5ecfc 0px,#e5ecfc 2.2px,#ffffff 2.2px,#ffffff 4px);background-attachment:fixed;border:1px dotted #999"></div><div class="a" style="left:507px;top:84px;width:960px;height:145px;border:1px dotted #999"></div><div class="a" style="left:498px;top:100px;width:978px;height:112px;background:repeating-linear-gradient(150deg,#e5ecfc 0px,#e5ecfc 2.2px,#ffffff 2.2px,#ffffff 4px);background-attachment:fixed;border:1px dotted #999"></div><div class="a" style="left:501px;top:116px;width:972px;height:60px;background:#ececec"></div><div class="a" style="left:501px;top:116px;width:972px;height:60px;background:repeating-linear-gradient(150deg,#e5ecfc 0px,#e5ecfc 2.2px,#ffffff 2.2px,#ffffff 4px);background-attachment:fixed;opacity:0.9;mix-blend-mode:multiply"></div><svg class="a" style="left:501px;top:116px" width="972" height="60" shape-rendering="crispEdges"><rect x="0.5" y="0.5" width="971" height="59" fill="none" stroke="#8a8a8a" stroke-width="1" stroke-dasharray="6 1.5 1 1.5"/><rect x="1.5" y="1.5" width="969" height="57" fill="none" stroke="#c4c4c4" stroke-width="1" stroke-dasharray="6 1.5 1 1.5"/></svg><div class="cl" style="left:410px;top:69px;height:14px;line-height:13px;padding:0 5px 0 2px">XPA Component Container</div><div class="cl" style="left:508px;top:85px;height:13px;line-height:13px;padding:0 2px 0 2px">Container</div><div class="cl" style="left:499px;top:101px;height:13px;line-height:13px;padding:0 2px 0 2px">Row</div><div class="cl" style="left:503px;top:118px;height:12px;line-height:12px;padding:0 3px 0 1px;background:#ececec">Column</div><div class="a" style="left:391px;top:559px;width:1173px;height:2px;background:#ababab"></div><div class="a" style="left:391px;top:561px;width:1173px;height:33px;background:#f2f2f2"></div><div class="etab" style="left:396px;width:114px;background:#6db7e1;border-color:#9a9a9a;color:#fff"><svg class="a" style="left:10px;top:7px" width="20" height="14" viewBox="0 0 20 14"><path d="M6 2.5L1.5 7 6 11.5M14 2.5L18.5 7 14 11.5M11.3 1L8.7 13" fill="none" stroke="#fff" stroke-width="1.4"/></svg><span class="a" style="left:46px;top:7px;line-height:16px">Template</span></div><div class="etab" style="left:515px;width:126px"><svg class="a" style="left:10px;top:6px" width="16" height="16" viewBox="0 0 16 16"><path fill="#8a8a8a" fill-rule="evenodd" d="M6.6 0h2.8l.4 2.2 1.5.8 2.1-.8 1.4 2.4-1.7 1.5v1.8l1.7 1.5-1.4 2.4-2.1-.8-1.5.8-.4 2.2H6.6l-.4-2.2-1.5-.8-2.1.8L1.2 10.5l1.7-1.5V7.1L1.2 5.6 2.6 3.2l2.1.8 1.5-.8zM8 5.4a2.6 2.6 0 1 0 0 5.2 2.6 2.6 0 0 0 0-5.2z"/></svg><span class="a" style="left:42px;top:7px;line-height:16px">Component</span></div><div class="etab" style="left:646px;width:124px"><svg class="a" style="left:10px;top:6px" width="20" height="16" viewBox="0 0 20 16"><rect x="1" y="1" width="18" height="14" fill="none" stroke="#8a8a8a" stroke-width="1.5"/><circle cx="5" cy="5" r="1.5" fill="#8a8a8a"/><path d="M3 13l5-6 3 3 2-2 4 5z" fill="#8a8a8a"/></svg><span class="a" style="left:45px;top:7px;line-height:16px">Styles</span><svg class="a" style="left:96px;top:6px" width="17" height="16" viewBox="0 0 17 16"><path d="M2.5 7a6 6 0 0 1 10.5-3M14.5 9a6 6 0 0 1-10.5 3" fill="none" stroke="#a9a9a9" stroke-width="2"/><path d="M15.5 0.5v5.5h-5.5z M1.5 15.5v-5.5h5.5z" fill="#a9a9a9"/></svg></div><div class="etab" style="left:1394px;width:165px"><svg class="a" style="left:10px;top:5px" width="12" height="18" viewBox="0 0 12 18"><path d="M5 1h5L7.5 7H11L4 17l2-7.5H2z" fill="#8a8a8a"/></svg><span class="a" style="left:40px;top:7px;line-height:16px">Live Preview Logs</span></div><div class="a" style="left:391px;top:594px;width:1173px;height:5px;background:#0095da"></div><div class="a" style="left:391px;top:599px;width:1173px;height:312px;background:#fffffd"></div><div class="a" style="left:450px;top:616px;width:1109px;height:2px;background:#eeeeee"></div><div class="a" style="left:450px;top:600px;width:8px;height:18px;background:#dbe5d8;border:1px solid #b9b9b9"></div><div class="a" style="left:1497px;top:600px;width:8px;height:18px;background:#dbe5d8;border:1px solid #b9b9b9"></div><div class="a" style="left:450px;top:618px;width:1px;height:76px;background:#d3d3d3"></div><div class="a" style="left:481px;top:656px;width:1px;height:19px;background:#d3d3d3"></div><div class="ln" style="top:600px">1</div><div class="ln" style="top:619px">2</div><div class="ln" style="top:638px">3</div><div class="ln" style="top:657px">4</div><div class="ln" style="top:676px">5</div><div class="ln" style="top:695px">6</div><div class="code" style="top:600px">&lt;<span class="tg">c-container</span> [<span class="at">formGroup</span>]=<span class="vl">&quot;screenFormGroup&quot;</span> <span class="at">novalidate</span> [<span class="at">magic</span>]=<span class="vl">&quot;mgc.MCard&quot;</span> <span class="at">class</span>=<span class="vl">&quot;allSideSpacing-containers&quot;</span> <span class="at">data-comp-id</span>=<span class="vl">&quot;c-container.1&quot;</span>&gt;</div><div class="code" style="top:619px"></div><div class="code" style="top:638px">    &lt;<span class="tg">c-row</span> <span class="at">data-comp-id</span>=<span class="vl">&quot;c-row.1&quot;</span> <span class="at">id</span>=<span class="vl">&quot;c-row.1&quot;</span> <span class="at">class</span>=<span class="vl">&quot;horizontal-line-bottom&quot;</span>&gt;</div><div class="code" style="top:657px">        &lt;<span class="tg">c-col</span> <span class="at">data-comp-id</span>=<span class="vl">&quot;c-column.1&quot;</span> <span class="at">id</span>=<span class="vl">&quot;c-column.1&quot;</span> <span class="at">sm</span>=<span class="vl">&quot;12&quot;</span> <span class="at">class</span>=<span class="vl">&quot;smallSpacingBottomOutsideContainer&quot;</span>&gt;&lt;/<span class="tg">c-col</span>&gt;</div><div class="code" style="top:676px">    &lt;/<span class="tg">c-row</span>&gt;</div><div class="code" style="top:695px">&lt;/<span class="tg">c-container</span>&gt;</div><div class="a" style="left:1559px;top:599px;width:5px;height:240px;background:#c3c3c3"></div><div class="a" style="left:1559px;top:599px;width:5px;height:3px;background:#555"></div><div class="a" style="left:1559px;top:839px;width:1px;height:72px;background:#dcdcdc"></div><div class="a" style="left:1570px;top:50px;width:350px;height:861px;background:#f3f3f3"></div><div class="ptab" style="left:1575px;width:96px"><svg class="a" style="left:10px;top:5px" width="17" height="19" viewBox="0 0 17 19"><g fill="#8a8a8a"><ellipse cx="8.5" cy="3.5" rx="8" ry="3"/><path d="M0.5 5.5c0 4 16 4 16 0v3c0 4-16 4-16 0z"/><path d="M0.5 10.5c0 4 16 4 16 0v3c0 4-16 4-16 0z"/></g></svg><span class="a" style="left:42px;top:6px;line-height:17px;width:45px;overflow:hidden">Models</span></div><div class="ptab" style="left:1676px;width:97px"><svg class="a" style="left:10px;top:7px" width="19" height="15" viewBox="0 0 19 15"><g fill="#8a8a8a"><rect x="7.5" y="0" width="4" height="4"/><rect x="0" y="11" width="4" height="4"/><rect x="7.5" y="11" width="4" height="4"/><rect x="15" y="11" width="4" height="4"/></g><path d="M9.5 4v7M2 11V7.5h15V11" fill="none" stroke="#8a8a8a" stroke-width="1.5"/></svg><span class="a" style="left:44px;top:6px;line-height:17px;width:43px;overflow:hidden">Outline</span></div><div class="ptab" style="left:1778px;width:142px;background:#6db7e1;border-color:#9bbfd6;color:#fff"><svg class="a" style="left:10px;top:5px" width="20" height="17" viewBox="0 0 20 17"><g fill="#fff"><rect x="0" y="0" width="3" height="3"/><rect x="4.5" y="0" width="15" height="3"/><rect x="0" y="4.5" width="3" height="3"/><rect x="4.5" y="4.5" width="15" height="3"/><rect x="0" y="9" width="3" height="3"/><rect x="4.5" y="9" width="15" height="3"/><rect x="0" y="13.5" width="3" height="3"/><rect x="4.5" y="13.5" width="15" height="3"/></g></svg><span class="a" style="left:45px;top:6px;line-height:17px;width:89px;overflow:hidden">PropertySheet</span></div><div class="a" style="left:1570px;top:83px;width:350px;height:5px;background:#0095da"></div><div class="a" style="left:1570px;top:88px;width:350px;height:32px;background:#d7d7d7"></div><div class="a" style="left:1580px;top:96px;font-size:14px;line-height:16px;color:#111">Column</div><svg class="a" style="left:1897px;top:96px" width="14" height="16" viewBox="0 0 14 16"><path d="M1 3h12M5 3V1.3h4V3" fill="none" stroke="#0095da" stroke-width="1.5"/><path d="M2.5 4.5h9l-.8 10.5H3.3z" fill="none" stroke="#0095da" stroke-width="1.5"/><path d="M5.5 6.5v6.5M7 6.5v6.5M8.5 6.5v6.5" stroke="#0095da" stroke-width="1"/></svg><div class="sh" style="left:1570px;top:120px;width:350px"><i class="tri"></i><b>Events &amp; Data</b></div><div class="a" style="left:1578px;top:153px;font-size:12px;line-height:14px;color:#111">Id</div><div class="a" style="left:1596px;top:150px;width:316px;height:21px;border:1px solid #a9a9a9;background:#fff;font-size:13px;line-height:19px;padding-left:4px;color:#111">c-column.1</div><div class="sh" style="left:1570px;top:182px;width:350px"><i class="tri"></i><b>Breakpoints</b></div><div class="lbl" style="left:1562px;top:215px">Extra small (xs)</div><div class="sel" style="top:212px"><span class="a" style="left:5px;top:1px;line-height:18px"></span></div><div class="lbl" style="left:1562px;top:239px">Small (sm)</div><div class="sel" style="top:236px"><span class="a" style="left:5px;top:1px;line-height:18px">12</span></div><div class="lbl" style="left:1562px;top:263px">Medium (md)</div><div class="sel" style="top:260px"><span class="a" style="left:5px;top:1px;line-height:18px"></span></div><div class="lbl" style="left:1562px;top:287px">Large (lg)</div><div class="sel" style="top:284px"><span class="a" style="left:5px;top:1px;line-height:18px"></span></div><div class="lbl" style="left:1562px;top:311px">Extra large (xl)</div><div class="sel" style="top:308px"><span class="a" style="left:5px;top:1px;line-height:18px"></span></div><div class="lbl" style="left:1562px;top:335px">Extra extra large (xxl)</div><div class="sel" style="top:332px"><span class="a" style="left:5px;top:1px;line-height:18px"></span></div><div class="sh" style="left:1570px;top:364px;width:350px"><i class="tri"></i><b>Styling Overrides</b></div><div class="a" style="left:1578px;top:397px;font-size:12px;line-height:14px;color:#111">Class</div><div class="a" style="left:1616px;top:394px;width:296px;height:57px;border:1px solid #aaa;background:#fff"></div><div class="a" style="left:1622px;top:399px;width:262px;height:20px;border:1px solid #aaa;border-radius:3px;background:linear-gradient(#f4f4f4,#e8e8e8);font-size:14px;color:#333"><svg class="a" style="left:5px;top:7px" width="8" height="8" viewBox="0 0 8 8"><path d="M1 1l6 6M7 1L1 7" stroke="#8a8a8a" stroke-width="2"/></svg><span class="a" style="left:18px;top:0px;line-height:16px">smallSpacingBottomOutsideContainer</span></div><div class="sh" style="left:1570px;top:469px;width:350px"><i class="tri"></i><b>Dynamic Properties</b></div><svg class="a" style="left:1580px;top:502px" width="14" height="14" viewBox="0 0 14 14"><path d="M7 0v14M0 7h14" stroke="#111" stroke-width="3.2"/></svg><div class="a" style="left:1601px;top:502px;font-size:13px;line-height:15px;color:#111">Add New Property</div></body></html>
